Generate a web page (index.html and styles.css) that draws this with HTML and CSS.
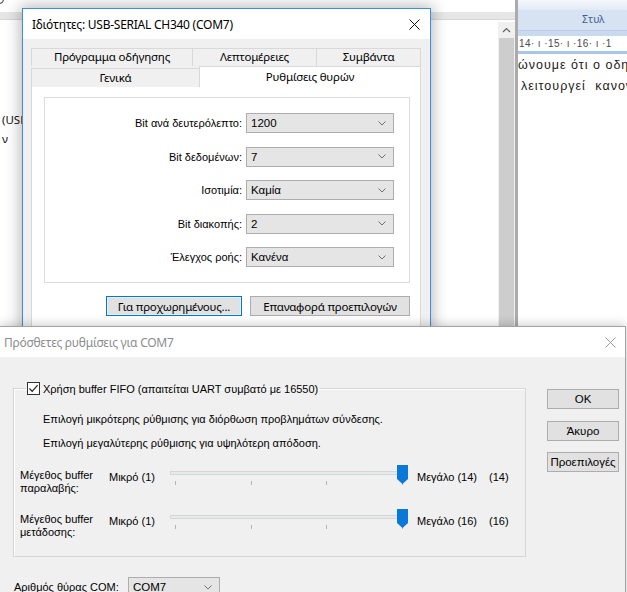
FILE: index.html
```html
<!DOCTYPE html>
<html lang="el">
<head>
<meta charset="utf-8">
<title>COM7</title>
<link rel="stylesheet" href="styles.css">
</head>
<body>
<div class="desk">

  <div class="bgwin">
    <div class="bg-top"><span class="bg-icon"></span></div>
    <div class="bg-band"></div>
    <div class="bg-main">
      <div class="bg-content">
        <div class="bg-line">(USB</div>
        <div class="bg-line">ν</div>
      </div>
      <div class="bg-scroll">
        <div class="bg-scroll-btn">
          <svg width="9" height="6" viewBox="0 0 9 6"><path d="M1 5 L4.5 1.5 L8 5" fill="none" stroke="#606060" stroke-width="1.2"/></svg>
        </div>
        <div class="bg-scroll-thumb"></div>
      </div>
    </div>
  </div>

  <div class="word">
    <div class="w-top"></div>
    <div class="w-ribbon">Στυλ</div>
    <div class="w-sep"></div>
    <div class="w-ruler">14· ı ·15· ı ·16· ı ·1</div>
    <div class="w-rulerline"></div>
    <div class="w-doc">
      <p class="w-p">ώνουμε ότι ο οδη</p>
      <p class="w-p w-p2">λειτουργεί κανον</p>
    </div>
  </div>

  <div class="dlg dlg1">
    <div class="d1-title">
      <span class="d1-caption">Ιδιότητες: USB-SERIAL CH340 (COM7)</span>
      <svg class="close" width="11" height="11" viewBox="0 0 11 11"><path d="M0.5 0.5 L10.5 10.5 M10.5 0.5 L0.5 10.5" stroke="#111" stroke-width="1"/></svg>
    </div>
    <div class="d1-body">
      <div class="tabs">
        <div class="tabrow tabrow-back">
          <div class="tab">Πρόγραμμα οδήγησης</div>
          <div class="tab">Λεπτομέρειες</div>
          <div class="tab">Συμβάντα</div>
        </div>
        <div class="tabrow tabrow-front">
          <div class="tab">Γενικά</div>
          <div class="tab tab-sel">Ρυθμίσεις θυρών</div>
        </div>
      </div>
      <div class="panel">
        <div class="frame">
          <label class="flabel">Bit ανά δευτερόλεπτο:</label>
          <div class="combo"><span>1200</span><svg width="8" height="5" viewBox="0 0 8 5"><path d="M0.5 0.5 L4 4 L7.5 0.5" fill="none" stroke="#707070" stroke-width="1"/></svg></div>
          <label class="flabel">Bit δεδομένων:</label>
          <div class="combo"><span>7</span><svg width="8" height="5" viewBox="0 0 8 5"><path d="M0.5 0.5 L4 4 L7.5 0.5" fill="none" stroke="#707070" stroke-width="1"/></svg></div>
          <label class="flabel">Ισοτιμία:</label>
          <div class="combo"><span>Καμία</span><svg width="8" height="5" viewBox="0 0 8 5"><path d="M0.5 0.5 L4 4 L7.5 0.5" fill="none" stroke="#707070" stroke-width="1"/></svg></div>
          <label class="flabel">Bit διακοπής:</label>
          <div class="combo"><span>2</span><svg width="8" height="5" viewBox="0 0 8 5"><path d="M0.5 0.5 L4 4 L7.5 0.5" fill="none" stroke="#707070" stroke-width="1"/></svg></div>
          <label class="flabel">Έλεγχος ροής:</label>
          <div class="combo"><span>Κανένα</span><svg width="8" height="5" viewBox="0 0 8 5"><path d="M0.5 0.5 L4 4 L7.5 0.5" fill="none" stroke="#707070" stroke-width="1"/></svg></div>
        </div>
        <div class="d1-buttons">
          <button class="btn btn-adv">Για προχωρημένους...</button>
          <button class="btn btn-reset">Επαναφορά προεπιλογών</button>
        </div>
      </div>
    </div>
  </div>

  <div class="dlg dlg2">
    <div class="d2-title">
      <span class="d2-caption">Πρόσθετες ρυθμίσεις για COM7</span>
      <svg class="close" width="11" height="11" viewBox="0 0 11 11"><path d="M0.5 0.5 L10.5 10.5 M10.5 0.5 L0.5 10.5" stroke="#9a9a9a" stroke-width="1"/></svg>
    </div>
    <div class="d2-body">
      <div class="d2-main">
        <fieldset class="fifo">
          <legend class="fifo-legend">
            <span class="check"><svg width="11" height="11" viewBox="0 0 11 11"><path d="M1.5 5.5 L4.2 8.3 L9.6 2.2" fill="none" stroke="#222" stroke-width="1.2"/></svg></span>
            <span>Χρήση buffer FIFO (απαιτείται UART συμβατό με 16550)</span>
          </legend>
          <p class="note note1">Επιλογή μικρότερης ρύθμισης για διόρθωση προβλημάτων σύνδεσης.</p>
          <p class="note note2">Επιλογή μεγαλύτερης ρύθμισης για υψηλότερη απόδοση.</p>
          <div class="sliders">
            <div class="s-label">Μέγεθος buffer<br>παραλαβής:</div>
            <div class="s-min">Μικρό (1)</div>
            <div class="slider">
              <div class="track"></div>
              <div class="ticks"><i></i><i></i><i></i><i></i></div>
              <svg class="thumb" width="11" height="19" viewBox="0 0 11 19"><path d="M0 0 H11 V14 L5.5 19 L0 14 Z" fill="#0a78d7"/></svg>
            </div>
            <div class="s-max">Μεγάλο (14)</div>
            <div class="s-val">(14)</div>

            <div class="s-label">Μέγεθος buffer<br>μετάδοσης:</div>
            <div class="s-min">Μικρό (1)</div>
            <div class="slider">
              <div class="track"></div>
              <div class="ticks"><i></i><i></i><i></i><i></i></div>
              <svg class="thumb" width="11" height="19" viewBox="0 0 11 19"><path d="M0 0 H11 V14 L5.5 19 L0 14 Z" fill="#0a78d7"/></svg>
            </div>
            <div class="s-max">Μεγάλο (16)</div>
            <div class="s-val">(16)</div>
          </div>
        </fieldset>
        <div class="d2-buttons">
          <button class="btn2">OK</button>
          <button class="btn2">Άκυρο</button>
          <button class="btn2">Προεπιλογές</button>
        </div>
      </div>
      <div class="d2-port">
        <span class="port-label">Αριθμός θύρας COM:</span>
        <div class="combo combo-port"><span>COM7</span><svg width="8" height="5" viewBox="0 0 8 5"><path d="M0.5 0.5 L4 4 L7.5 0.5" fill="none" stroke="#707070" stroke-width="1"/></svg></div>
      </div>
    </div>
  </div>

</div>
</body>
</html>
```

FILE: styles.css
```css
* { box-sizing: border-box; }
html, body { margin: 0; padding: 0; }
body {
  width: 627px;
  height: 592px;
  overflow: hidden;
  font-family: "Liberation Sans", Arial, sans-serif;
  font-size: 11px;
  color: #000;
}
p { margin: 0; }
button { font: inherit; color: inherit; margin: 0; }

.desk {
  position: relative;
  width: 627px;
  height: 592px;
  overflow: hidden;
  background: #fff;
}

/* background application window */
.bgwin {
  position: absolute;
  left: 0;
  top: 0;
  width: 518px;
  height: 592px;
  display: flex;
  flex-direction: column;
  background: #fff;
  border-right: 3px solid #ababab;
}
.bg-top { height: 12px; position: relative; }
.bg-icon {
  position: absolute;
  left: -5px;
  top: -5px;
  width: 9px;
  height: 9px;
  border: 1.5px solid #333;
  border-radius: 50%;
}
.bg-band {
  height: 8px;
  background: #e6e6e6;
  border-bottom: 1px solid #d6d6d6;
}
.bg-main { flex: 1; display: flex; }
.bg-content {
  flex: 1;
  padding: 90px 0 0 2px;
  font-family: "Noto Sans", sans-serif;
  font-size: 11.5px;
  line-height: 19px;
  color: #111;
}
.bg-scroll {
  width: 17px;
  margin-top: 2px;
  display: flex;
  flex-direction: column;
  background: #f0f0f0;
}
.bg-scroll-btn {
  height: 16px;
  display: flex;
  align-items: center;
  justify-content: center;
}
.bg-scroll-thumb { flex: 1; background: #cdcdcd; margin: 0 1px; }

/* word window */
.word {
  position: absolute;
  left: 518px;
  top: 0;
  width: 109px;
  height: 592px;
  display: flex;
  flex-direction: column;
  background: #fff;
}
.w-top { height: 10px; background: linear-gradient(#f4f7fb, #e2eaf5); }
.w-ribbon {
  height: 21px;
  background: #d7e3f3;
  border-bottom: 1px solid #bccde6;
  padding-left: 64px;
  font-family: "Noto Sans", sans-serif;
  font-size: 10.5px;
  line-height: 19px;
  color: #3e5f8f;
}
.w-sep { height: 5px; background: #c9d9ee; }
.w-ruler {
  height: 15px;
  padding-left: 1px;
  background: #fff;
  font-family: "Liberation Sans", sans-serif;
  font-size: 10px;
  letter-spacing: 0.4px;
  line-height: 15px;
  color: #4a4a4a;
  white-space: nowrap;
}
.w-rulerline { height: 3px; background: #a9c5e8; }
.w-doc { padding-top: 1px; white-space: nowrap; }
.w-p {
  font-family: "Liberation Sans", sans-serif;
  font-size: 12.5px;
  letter-spacing: 1px;
  line-height: 21px;
  color: #1a1a1a;
}
.w-p2 { padding-left: 3px; word-spacing: 5px; }

/* dialogs */
.dlg { position: absolute; background: #f0f0f0; display: flex; flex-direction: column; }

.dlg1 {
  left: 22px;
  top: 8px;
  width: 409px;
  height: 345px;
  border: 1px solid #3a8ee3;
  box-shadow: 0 0 14px 2px rgba(0, 0, 0, 0.28);
}
.d1-title {
  height: 30px;
  background: #fff;
  display: flex;
  align-items: center;
  justify-content: space-between;
  padding: 0 10px 0 9px;
  font-family: "Noto Sans", sans-serif;
  font-size: 12px;
}
.d1-caption { letter-spacing: -0.25px; }
.d1-body { flex: 1; padding: 9px 9px 0 8px; display: flex; flex-direction: column; }

.tabs { display: flex; flex-direction: column; font-family: "Noto Sans", sans-serif; font-size: 11.5px; letter-spacing: -0.2px; }
.tabrow { display: grid; height: 18px; }
.tabrow-back { grid-template-columns: 162px 124px 1fr; }
.tabrow-front { grid-template-columns: 169px 1fr; align-items: end; margin-bottom: -1px; position: relative; z-index: 1; }
.tab {
  height: 18px;
  border: 1px solid #d9d9d9;
  border-bottom: none;
  background: #f0f0f0;
  text-align: center;
  line-height: 16px;
  margin-left: -1px;
  white-space: nowrap;
}
.tab:first-child { margin-left: 0; }
.tabrow-front .tab { height: 19px; line-height: 17px; }
.tab-sel { height: 21px !important; background: #fff; line-height: 19px !important; }

.panel {
  flex: 1;
  background: #fff;
  border: 1px solid #d9d9d9;
  border-bottom: none;
  padding: 13px 10px 0 12px;
}
.frame {
  border: 1px solid #dcdcdc;
  padding: 15px 14px 15px 0;
  display: grid;
  grid-template-columns: 197px 148px;
  column-gap: 4px;
  row-gap: 13.5px;
}
.flabel { text-align: right; align-self: center; white-space: nowrap; }
.combo {
  height: 20px;
  border: 1px solid #adadad;
  background: #e5e5e5;
  display: flex;
  align-items: center;
  justify-content: space-between;
  padding: 0 7px 0 4px;
  font-size: 11.5px;
}
.d1-buttons { display: flex; justify-content: flex-end; gap: 8px; margin-top: 13px; }
.btn {
  height: 20px;
  border: 1px solid #adadad;
  background: #e1e1e1;
  font-family: "Noto Sans", sans-serif;
  font-size: 11.5px;
  letter-spacing: -0.2px;
  padding: 0;
  line-height: 17px;
}
.btn-adv { width: 136px; border-color: #0078d7; box-shadow: inset 0 0 0 1px #e5f1fb; }
.btn-reset { width: 160px; }

.dlg2 {
  left: -1px;
  top: 326px;
  width: 627px;
  height: 280px;
  border: 1px solid #a3a3a3;
  box-shadow: 0 -1px 10px rgba(0, 0, 0, 0.22);
}
.d2-title {
  height: 30px;
  background: #fff;
  display: flex;
  align-items: center;
  justify-content: space-between;
  padding: 0 9px 0 4px;
  font-family: "Noto Sans", sans-serif;
  font-size: 12px;
  color: #8c8c8c;
}
.d2-caption { letter-spacing: -0.25px; }
.d2-body { flex: 1; padding: 25px 0 0 13px; }
.d2-main { display: flex; align-items: flex-start; }

.fifo {
  margin: 0;
  width: 513px;
  min-width: 0;
  padding: 0 0 3px 6px;
  border: 1px solid #d5d5d5;
  box-shadow: inset 1px 1px 0 #fff;
}
.fifo-legend {
  display: flex;
  align-items: center;
  gap: 3px;
  margin-left: 6px;
  padding: 0 2px 0 1px;
  height: 13px;
  white-space: nowrap;
}
.check {
  width: 13px;
  height: 13px;
  border: 1px solid #333;
  background: #fff;
  display: flex;
  align-items: center;
  justify-content: center;
}
.note { margin-left: 23px; line-height: 13px; white-space: nowrap; }
.note1 { margin-top: 18px; }
.note2 { margin-top: 11px; }

.sliders {
  margin-top: 15px;
  display: grid;
  grid-template-columns: 89px 61px 247px 72px auto;
  grid-auto-rows: 44px;
  align-items: start;
}
.s-label { margin-top: 4px; line-height: 13px; white-space: nowrap; }
.s-min, .s-max, .s-val { margin-top: 6px; line-height: 13px; white-space: nowrap; }
.slider { position: relative; width: 238px; height: 22px; }
.track {
  margin-top: 6px;
  width: 232px;
  height: 4px;
  border: 1px solid #d6d6d6;
  background: #e7eaea;
}
.ticks {
  margin: 6px 0 0 5px;
  width: 228px;
  height: 4px;
  display: flex;
  justify-content: space-between;
}
.ticks i { width: 1px; height: 4px; background: #b4b4b4; }
.thumb { position: absolute; left: 227px; top: 0; }

.d2-buttons { margin-left: 21px; padding-top: 7px; display: flex; flex-direction: column; gap: 11.5px; }
.btn2 {
  width: 72px;
  height: 20px;
  border: 1px solid #adadad;
  background: #e1e1e1;
  padding: 0;
  font-size: 11.5px;
}

.d2-port { display: flex; align-items: center; margin-top: 20px; padding-left: 1px; }
.port-label { width: 114px; white-space: nowrap; }
.combo-port { width: 92px; }
```
